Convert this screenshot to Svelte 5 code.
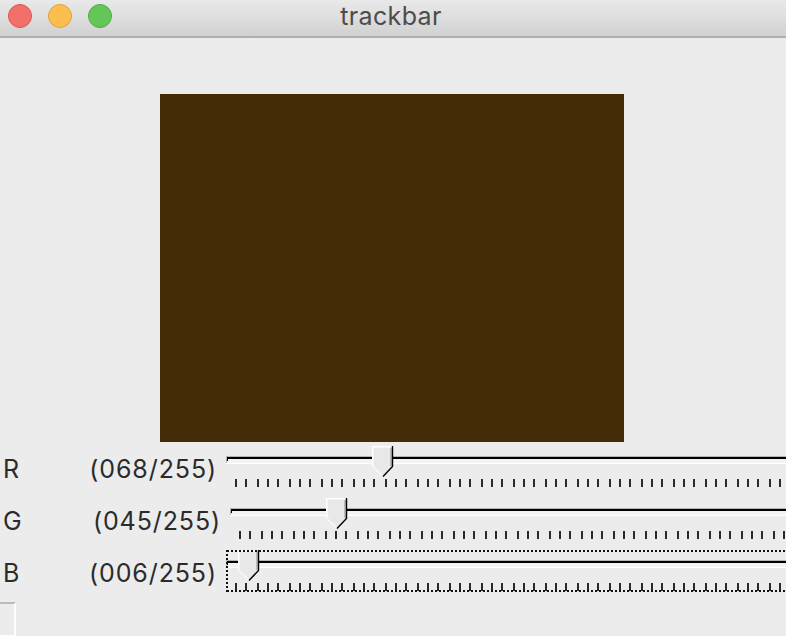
<script lang="ts">
  const sliders = [
    { name: "R", value: 68, shifted: false, focused: false },
    { name: "G", value: 45, shifted: true, focused: false },
    { name: "B", value: 6, shifted: false, focused: true },
  ];

  // tick marks land on even pixels, about 10.67px apart
  const ticks = Array.from({ length: 52 }, (_, i) => 8 + 2 * Math.round((i * 16) / 3));

  const pad = (v: number) => String(v).padStart(3, "0");
  const handleX = (v: number) => Math.round(v * 2.161 - 2);
  const color = `rgb(${sliders.map((s) => s.value).join(",")})`;
</script>

<div class="window">
  <header class="titlebar">
    <div class="lights">
      <span class="light red"></span>
      <span class="light yellow"></span>
      <span class="light green"></span>
    </div>
    <div class="title">trackbar</div>
  </header>

  <main class="content">
    <div class="canvas" style="background: {color}"></div>

    {#each sliders as s}
      <div class="row" class:shifted={s.shifted}>
        <div class="caption">
          <span>{s.name}</span>
          <span>({pad(s.value)}/255)</span>
        </div>
        <svg class="slider" height="46" shape-rendering="crispEdges">
          <rect x="-1" y="10" width="800" height="1" fill="#b4b4b4" />
          <rect x="-1" y="13" width="800" height="4" fill="#f3f3f3" />
          <rect x="-1" y="17" width="800" height="1" fill="#fff" />
          <rect x="-1" y="10" width="1" height="7" fill="#b4b4b4" />
          <rect x="0" y="11" width="800" height="2" fill="#000" />
          <rect x="0" y="13" width="1" height="2" fill="#000" />

          {#each ticks as t}
            <rect x={t} y="33" width="2" height="8" fill="#2a2a2a" />
          {/each}

          <g transform="translate({handleX(s.value)} 0)">
            <polygon points="0,0 20,0 20,20 11,30 0,20" fill="#e8e8e8" shape-rendering="auto" />
            <path d="M18.5 1.5V20" fill="none" stroke="#bdbdbd" stroke-width="2" />
            <path d="M0 0.5H20M0.5 0V20" fill="none" stroke="#fff" stroke-width="1" />
            <path d="M1 1.5H18M1.5 1V20" fill="none" stroke="#f4f4f4" stroke-width="1" />
            <path d="M1 20.5L11 30" fill="none" stroke="#f8f8f8" stroke-width="1.6" shape-rendering="auto" />
            <path d="M20.5 0V20.5L11 30.5" fill="none" stroke="#000" stroke-width="1.4" shape-rendering="auto" />
          </g>

          {#if s.focused}
            <path class="focus" d="M0 1H800M0 41H800M0 0V42" />
          {/if}
        </svg>
      </div>
    {/each}

    <div class="stub"></div>
  </main>
</div>

<style>
  :global(body) {
    margin: 0;
    background: #ececec;
  }

  .window {
    width: 786px;
    height: 636px;
    overflow: hidden;
    font-family: Inter, "Liberation Sans", sans-serif;
    color: #2b2b2b;
  }

  .titlebar {
    height: 36px;
    display: flex;
    align-items: center;
    position: relative;
    background: linear-gradient(#e9e9e9, #d1d1d1);
    border-bottom: 2px solid #b0b0b0;
  }

  .lights {
    display: flex;
    gap: 16px;
    padding-left: 8px;
    margin-top: -4px;
  }

  .light {
    width: 22px;
    height: 22px;
    border-radius: 50%;
    border: 1px solid;
  }

  .red {
    background: #f2706a;
    border-color: #dc5650;
  }

  .yellow {
    background: #fbbe4f;
    border-color: #e0a240;
  }

  .green {
    background: #62c756;
    border-color: #52ab47;
  }

  .title {
    position: absolute;
    left: 0;
    right: 4px;
    top: 2px;
    text-align: center;
    font-size: 25px;
    letter-spacing: 0.35px;
    line-height: 28px;
    color: #4c4c4c;
  }

  .content {
    padding-top: 56px;
  }

  .canvas {
    width: 464px;
    height: 348px;
    margin-left: 160px;
  }

  .row {
    height: 52px;
    display: grid;
    grid-template-columns: 227px 1fr;
  }

  .row.shifted {
    grid-template-columns: 231px 1fr;
  }

  .caption {
    display: flex;
    justify-content: space-between;
    padding: 12px 10px 0 3px;
    font-size: 25px;
    letter-spacing: 0.9px;
    line-height: 30px;
  }

  .slider {
    display: block;
    width: 100%;
    margin-top: 4px;
    overflow: visible;
  }

  .focus {
    fill: none;
    stroke: #111;
    stroke-width: 2;
    stroke-dasharray: 2 2;
  }

  .stub {
    width: 14px;
    height: 31px;
    margin-top: 4px;
    border-top: 2px solid #bcbcbc;
    border-right: 2px solid #fff;
    border-bottom: 1px solid #fff;
  }
</style>
